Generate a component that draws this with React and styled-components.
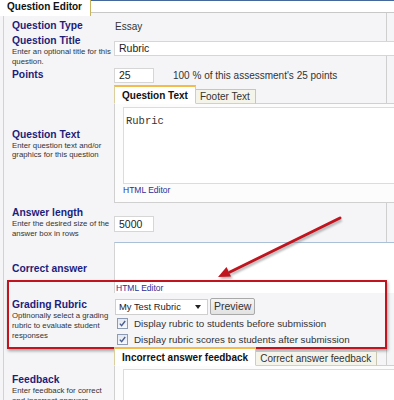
import React from 'react';
import styled, { createGlobalStyle } from 'styled-components';

const GlobalStyle = createGlobalStyle`
  html, body {
    margin: 0;
    padding: 0;
    background: #f5f5f8;
    overflow: hidden;
  }
  body {
    font-family: "Liberation Sans", Arial, sans-serif;
    color: #333;
  }
`;

function App() {
  return (
    <Page>
      <GlobalStyle />
      <Header>
        <HeaderTab>Question Editor</HeaderTab>
        <HeaderRule />
      </Header>

      <Panel>
        <Row $h={21} $align="center" $pt={5}>
          <Label><Title>Question Type</Title></Label>
          <Value>Essay</Value>
        </Row>

        <Row $h={31}>
          <Label $pt={1}>
            <Title>Question Title</Title>
            <Hint>Enter an optional title for this<br />question.</Hint>
          </Label>
          <Field $w={300} $mt={7}>Rubric</Field>
        </Row>

        <Row $h={20} $align="center">
          <Label><Title>Points</Title></Label>
          <Inline>
            <Field $w={40} $mt={0}>25</Field>
            <Value $ml={19}>100 % of this assessment's 25 points</Value>
          </Inline>
        </Row>

        <Row $h={118} $align="center">
          <Label>
            <Title>Question Text</Title>
            <Hint>Enter question text and/or<br />graphics for this question</Hint>
          </Label>
          <Editor>
            <TabBar>
              <Tab $active>Question Text</Tab>
              <Tab>Footer Text</Tab>
            </TabBar>
            <Pane $h={100}>
              <EditBox $h={77}><Mono>Rubric</Mono></EditBox>
              <EditorLink>HTML Editor</EditorLink>
            </Pane>
          </Editor>
        </Row>

        <Row $h={39}>
          <Label $pt={4}>
            <Title>Answer length</Title>
            <Hint>Enter the desired size of the<br />answer box in rows</Hint>
          </Label>
          <Field $w={40} $mt={13} $h={16}>5000</Field>
        </Row>

        <Row $h={51} $align="center">
          <Label $pt={2}><Title>Correct answer</Title></Label>
          <AnswerBox>
            <EditorLink $flush>HTML Editor</EditorLink>
          </AnswerBox>
        </Row>

        <Row $h={54} $align="center">
          <Label>
            <Title>Grading Rubric</Title>
            <Hint $lh={10}>Optinonally select a grading<br />rubric to evaluate student<br />responses</Hint>
          </Label>
          <RubricControls>
            <Inline>
              <Select>
                My Test Rubric
                <Caret viewBox="0 0 6 4"><path d="M0 0h6L3 4z" /></Caret>
              </Select>
              <Button>Preview</Button>
            </Inline>
            <CheckRow>
              <CheckBox><CheckMark /></CheckBox>
              Display rubric to students before submission
            </CheckRow>
            <CheckRow>
              <CheckBox><CheckMark /></CheckBox>
              Display rubric scores to students after submission
            </CheckRow>
          </RubricControls>
        </Row>

        <Row $h={90}>
          <Label $pt={27}>
            <Title>Feedback</Title>
            <Hint $lh={10}>Enter feedback for correct<br />and incorrect answers</Hint>
          </Label>
          <Editor>
            <TabBar>
              <Tab $active>Incorrect answer feedback</Tab>
              <Tab>Correct answer feedback</Tab>
            </TabBar>
            <Pane $h={80}>
              <EditBox $h={70} />
            </Pane>
          </Editor>
        </Row>
      </Panel>

      <Highlight />
      <Arrow width="140" height="76" viewBox="0 0 140 76">
        <defs>
          <filter id="soft" x="-20%" y="-20%" width="140%" height="140%">
            <feGaussianBlur stdDeviation="1" />
          </filter>
        </defs>
        <g transform="translate(1.5 2)" fill="#777" stroke="#777" opacity="0.55" filter="url(#soft)">
          <line x1="130" y1="7" x2="20" y2="61" strokeWidth="3" />
          <polygon points="8,66 21,65.5 16.5,56" stroke="none" />
        </g>
        <g fill="#c0141e" stroke="#c0141e">
          <line x1="130" y1="7" x2="20" y2="61" strokeWidth="3" strokeLinecap="round" />
          <polygon points="8,66 21,65.5 16.5,56" stroke="none" />
        </g>
      </Arrow>
    </Page>
  );
}

export default App;

const Page = styled.div`
  position: relative;
  width: 394px;
  height: 400px;
  overflow: hidden;
  background: #f5f5f8;
`;

const Header = styled.div`
  display: flex;
  align-items: flex-start;
  height: 13px;
`;

const HeaderTab = styled.div`
  position: relative;
  z-index: 1;
  box-sizing: border-box;
  width: 91px;
  height: 16px;
  padding: 1px 0 0 7px;
  background: #fff;
  border-right: 1px solid #c9b45e;
  font-weight: bold;
  font-size: 10px;
  line-height: 12px;
  color: #111;
`;

const HeaderRule = styled.div`
  flex: 1;
  box-sizing: border-box;
  height: 13px;
  background: #fff;
  border-top: 1px solid #44679c;
  border-bottom: 1px solid #c8c8c8;
`;

const Panel = styled.div`
  box-sizing: border-box;
  margin-left: 3px;
  width: 384px;
  border-left: 1px solid #d2d2d2;
  border-right: 1px solid #cfcfcf;
`;

const Row = styled.div`
  display: grid;
  grid-template-columns: 110px minmax(0, 1fr);
  box-sizing: border-box;
  height: ${p => p.$h}px;
  padding-top: ${p => p.$pt || 0}px;
  align-items: ${p => p.$align || 'start'};
`;

const Label = styled.div`
  padding: ${p => p.$pt || 0}px 0 0 8px;
  white-space: nowrap;
`;

const Title = styled.div`
  font-weight: bold;
  font-size: 10.3px;
  line-height: 12px;
  color: #1d1d7a;
`;

const Hint = styled.div`
  font-size: 7.8px;
  line-height: ${p => p.$lh || 9.5}px;
  color: #333;
`;

const Value = styled.span`
  margin-left: ${p => p.$ml ?? 1}px;
  font-size: 10px;
  color: #333;
  white-space: nowrap;
`;

const Inline = styled.div`
  display: flex;
  align-items: center;
`;

const Field = styled.div`
  box-sizing: border-box;
  width: ${p => p.$w}px;
  height: ${p => p.$h || 15}px;
  margin-top: ${p => p.$mt}px;
  padding-left: 4px;
  flex-shrink: 0;
  background: #fff;
  border: 1px solid #d6d6d6;
  font-size: 10.5px;
  line-height: ${p => (p.$h || 15) - 2}px;
  color: #222;
`;

const Editor = styled.div`
  display: flex;
  flex-direction: column;
  width: 300px;
`;

const TabBar = styled.div`
  display: flex;
  align-items: flex-end;
  position: relative;
  z-index: 1;
  margin-bottom: -1px;
`;

const Tab = styled.div`
  box-sizing: border-box;
  height: ${p => (p.$active ? 19 : 15)}px;
  padding: ${p => (p.$active ? '3px 7px 0' : '1px 5px 0 4px')};
  background: ${p => (p.$active ? '#fff' : '#f4f4ea')};
  border: 1px solid ${p => (p.$active ? '#dccf9e' : '#c9c6b2')};
  border-top: ${p => (p.$active ? '2px solid #f2bb4e' : '1px solid #c9c6b2')};
  border-bottom: ${p => (p.$active ? '1px solid #fff' : '1px solid #d0d0d0')};
  border-left-width: ${p => (p.$active ? 1 : 0)}px;
  font-size: 10px;
  font-weight: ${p => (p.$active ? 'bold' : 'normal')};
  line-height: 12px;
  color: ${p => (p.$active ? '#111' : '#333')};
  white-space: nowrap;
`;

const Pane = styled.div`
  box-sizing: border-box;
  height: ${p => p.$h}px;
  padding: 3px 0 0 8px;
  background: #fcfcfc;
  border: 1px solid #d0d0d0;
  border-right: none;
`;

const EditBox = styled.div`
  box-sizing: border-box;
  height: ${p => p.$h}px;
  padding: 2px 0 0 2px;
  background: #fff;
  border: 1px solid #dcdcdc;
  border-right: none;
`;

const Mono = styled.span`
  font-family: "Liberation Mono", "Courier New", monospace;
  font-size: 10.5px;
  line-height: 12px;
  color: #333;
`;

const EditorLink = styled.div`
  margin-top: ${p => (p.$flush ? 0 : 1)}px;
  padding-left: ${p => (p.$flush ? 1 : 0)}px;
  font-size: 8.5px;
  line-height: 10px;
  color: #2e2e96;
`;

const AnswerBox = styled.div`
  box-sizing: border-box;
  display: flex;
  flex-direction: column;
  justify-content: flex-end;
  width: 300px;
  height: 51px;
  background: #fff;
  border-top: 1px solid #a9c0d6;
  border-left: 1px solid #d4d4d4;
`;

const RubricControls = styled.div`
  display: flex;
  flex-direction: column;
  padding: 5px 0 0 1px;
  align-self: start;
`;

const Select = styled.div`
  box-sizing: border-box;
  display: flex;
  align-items: center;
  justify-content: space-between;
  width: 93px;
  height: 16px;
  padding: 0 6px 0 3px;
  background: #fff;
  border: 1px solid #cfcfcf;
  font-size: 9.4px;
  color: #222;
`;

const Caret = styled.svg`
  width: 6px;
  height: 4px;
  fill: #222;
`;

const Button = styled.div`
  box-sizing: border-box;
  height: 17px;
  margin-left: 2px;
  padding: 0 3px;
  background: linear-gradient(#f4f4f4, #e2e2e2);
  border: 1px solid #a9a9a9;
  border-radius: 2px;
  font-size: 10.5px;
  line-height: 15px;
  color: #333;
`;

const CheckRow = styled.div`
  display: flex;
  align-items: center;
  height: 16px;
  font-size: 9.8px;
  color: #333;
  white-space: nowrap;
`;

const CheckBox = styled.span`
  box-sizing: border-box;
  display: inline-flex;
  align-items: center;
  justify-content: center;
  width: 11px;
  height: 11px;
  margin: 0 6px 0 2px;
  background: linear-gradient(#e3e8f1, #f6f8fb);
  border: 1px solid #8c9bb3;
`;

const CheckMark = () => (
  <svg width="7" height="7" viewBox="0 0 7 7">
    <path d="M0.8 3.6 L2.6 5.6 L6.2 1" fill="none" stroke="#4b5d8f" strokeWidth="1.4" />
  </svg>
);

const Highlight = styled.div`
  position: absolute;
  left: 7px;
  top: 280px;
  width: 380px;
  height: 69px;
  box-sizing: border-box;
  border: 2px solid #c0141e;
  box-shadow: 1px 2px 3px rgba(0, 0, 0, 0.35);
  pointer-events: none;
`;

const Arrow = styled.svg`
  position: absolute;
  left: 210px;
  top: 211px;
  pointer-events: none;
  overflow: visible;
`;
